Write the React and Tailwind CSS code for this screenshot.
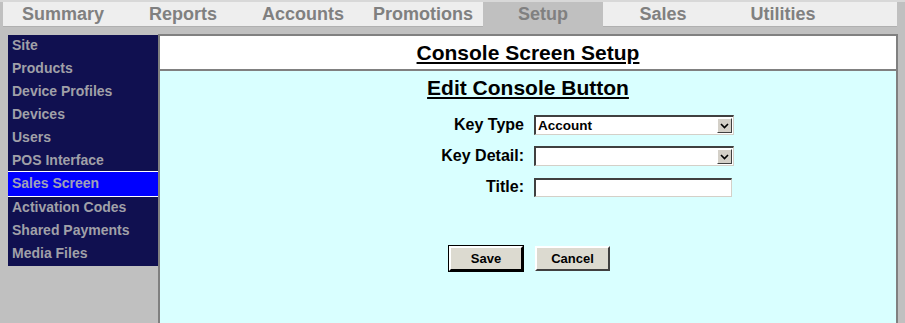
import React from "react";

const tabs = ["Summary", "Reports", "Accounts", "Promotions", "Setup", "Sales", "Utilities"];
const items = ["Site", "Products", "Device Profiles", "Devices", "Users", "POS Interface", "Sales Screen", "Activation Codes", "Shared Payments", "Media Files"];

function Select({ value }) {
  return (
    <div className="flex h-[20px] w-[200px] border-t-2 border-l-2 border-t-[#404040] border-l-[#404040] border-b border-r border-b-[#d4d0c8] border-r-[#d4d0c8] bg-white">
      <div className="flex-1 pl-[2px] text-[13.5px] font-bold leading-[17px] text-black">{value}</div>
      <div className="m-[1px] flex h-[15px] w-[15px] items-center justify-center border border-t-white border-l-white border-b-[#404040] border-r-[#404040] bg-[#d4d0c8]">
        <svg width="9" height="6" viewBox="0 0 9 6">
          <path d="M1 1 L4.5 4.5 L8 1" stroke="#000" strokeWidth="1.6" fill="none" />
        </svg>
      </div>
    </div>
  );
}

export default function App() {
  return (
    <div className="h-[323px] w-[905px] overflow-hidden bg-[#c0c0c0]" style={{ fontFamily: '"Liberation Sans", Arial, sans-serif' }}>
      <div className="flex h-[27px] border-t-2 border-t-[#d8d8d8] pl-[3px] pr-[8px]">
        {tabs.map((t) => (
          <div
            key={t}
            className={`w-[120px] text-center text-[18px] font-bold leading-[25px] text-[#808080] ${t === "Setup" ? "bg-[#c0c0c0]" : "border-b border-b-[#b0b0b0] bg-[#eeeeee]"}`}
          >
            {t}
          </div>
        ))}
        <div className="flex-1 border-b border-b-[#b0b0b0] bg-[#eeeeee]" />
      </div>
      <div className="flex pt-[7px]">
        <div className="w-[158px] pl-[8px] pt-[1px]">
          <div className="flex w-[150px] flex-col bg-[#101050]">
            {items.map((it) =>
              it === "Sales Screen" ? (
                <div key={it} className="-mt-[2px] h-[26px] border-y border-y-white bg-[#0000ff] pl-[4px] text-[14px] font-bold leading-[23px] text-[#a0a0b8]">
                  {it}
                </div>
              ) : (
                <div key={it} className="h-[23px] pl-[4px] text-[14px] font-bold leading-[21px] text-[#a0a0a8]">
                  {it}
                </div>
              )
            )}
          </div>
        </div>
        <div className="h-[300px] w-[740px] border-x-2 border-t-2 border-[#808080]">
          <div className="h-[35px] border-b-2 border-b-[#808080] bg-white text-center text-[21px] font-bold leading-[34px] text-black underline">
            Console Screen Setup
          </div>
          <div className="h-[300px] bg-[#d9ffff] pt-[5px]">
            <div className="text-center text-[21px] font-bold leading-[24px] text-black underline">Edit Console Button</div>
            <div className="mt-[15px] flex flex-col gap-[11px]">
              <div className="flex h-[20px] items-center">
                <div className="w-[374px] pr-[10px] text-right text-[16px] font-bold leading-[20px] text-black">Key Type</div>
                <Select value="Account" />
              </div>
              <div className="flex h-[20px] items-center">
                <div className="w-[374px] pr-[10px] text-right text-[16px] font-bold leading-[20px] text-black">Key Detail:</div>
                <Select value="" />
              </div>
              <div className="flex h-[20px] items-center">
                <div className="w-[374px] pr-[10px] text-right text-[16px] font-bold leading-[20px] text-black">Title:</div>
                <div className="h-[19px] w-[198px] border-t-2 border-l-2 border-t-[#404040] border-l-[#404040] border-b border-r border-b-[#d4d0c8] border-r-[#d4d0c8] bg-white" />
              </div>
            </div>
            <div className="mt-[49px] flex gap-[12px] pl-[289px]">
              <button className="h-[25px] w-[74px] border-2 border-t-white border-l-white border-b-black border-r-black bg-[#dcdad0] text-[13px] font-bold text-black outline outline-1 outline-black">
                Save
              </button>
              <button className="h-[25px] w-[75px] border-2 border-t-white border-l-white border-b-[#404040] border-r-[#404040] bg-[#dcdad0] text-[13px] font-bold text-black">
                Cancel
              </button>
            </div>
          </div>
        </div>
      </div>
    </div>
  );
}
